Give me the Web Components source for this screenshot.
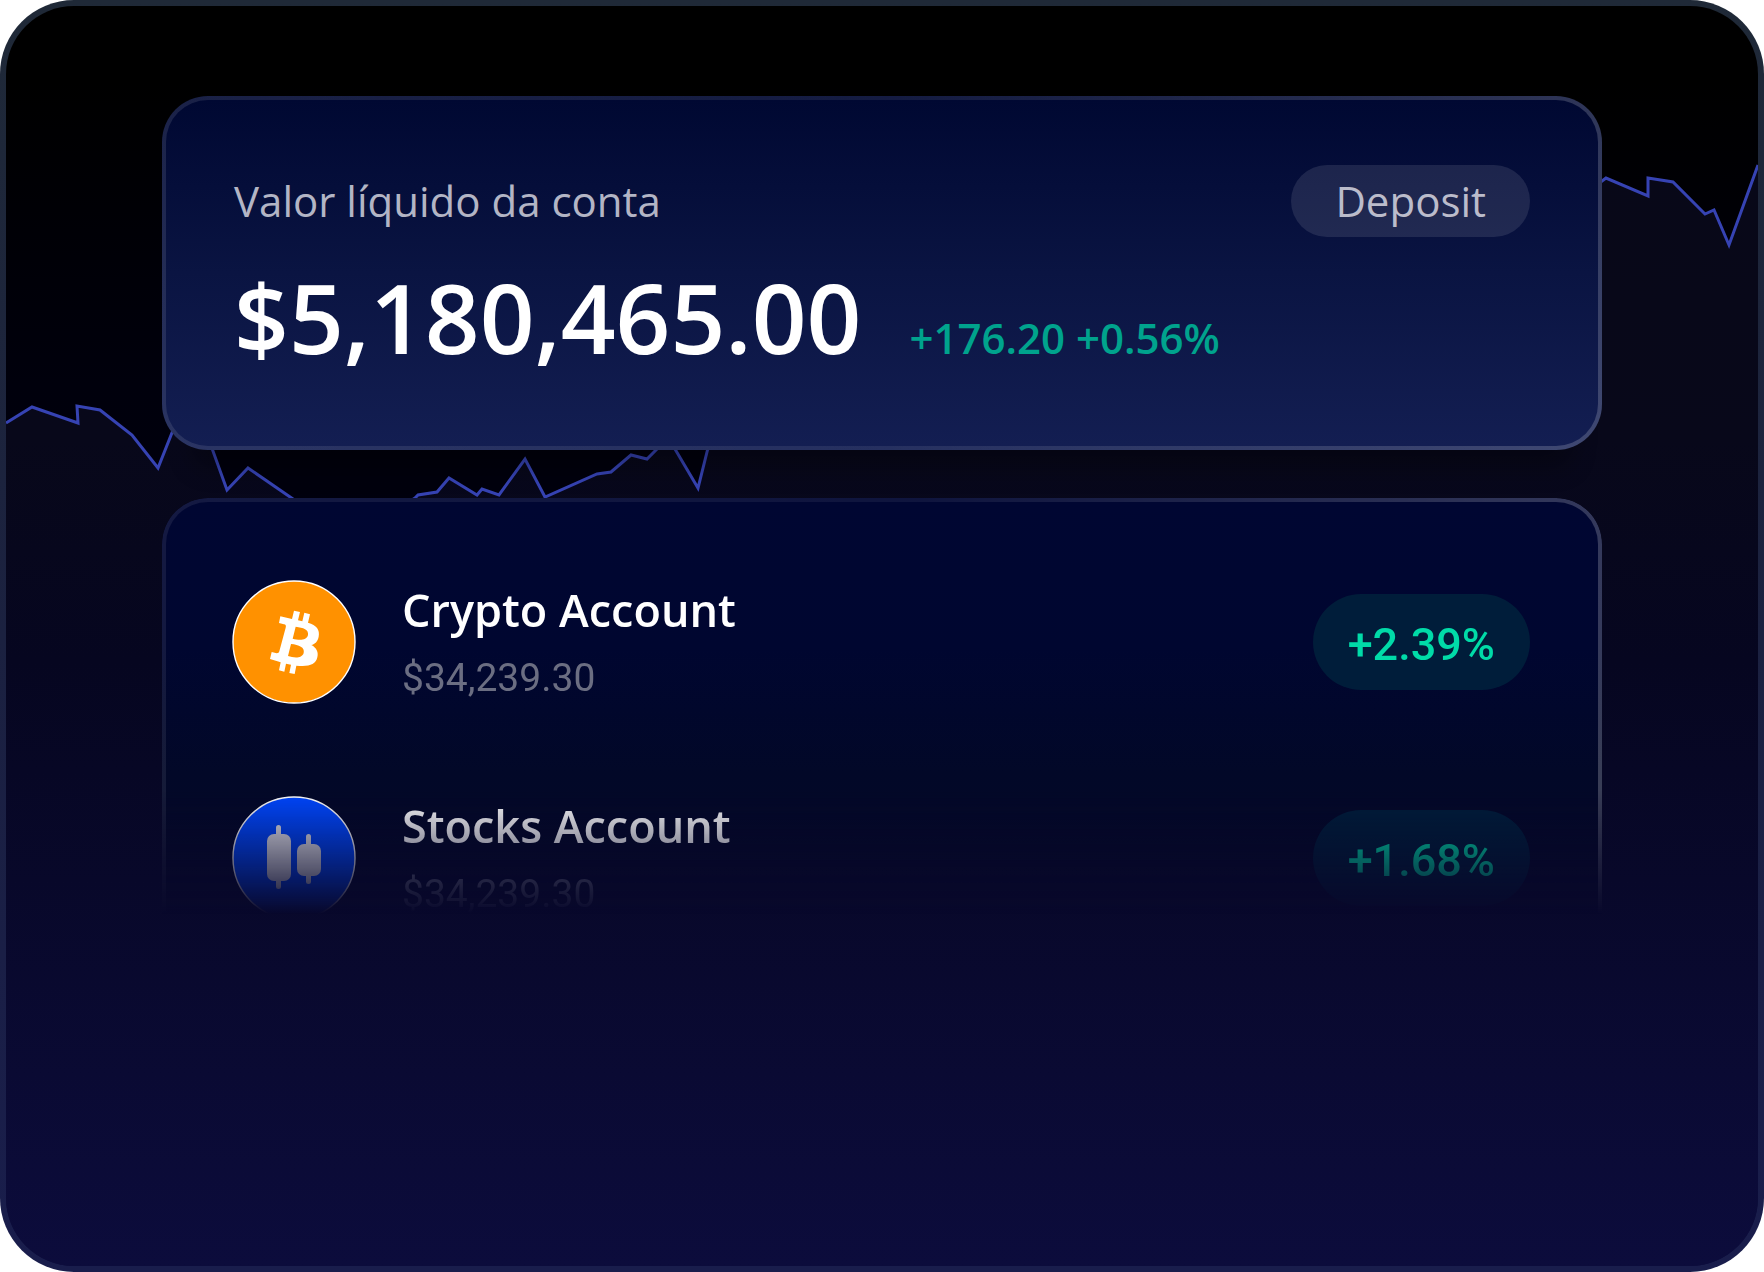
<!DOCTYPE html>
<html lang="pt">
<head>
<meta charset="utf-8">
<meta name="viewport" content="width=device-width, initial-scale=1">
<title>Valor líquido da conta</title>
<style>
    body {
        margin: 0;
        background: #fff;
        font-family: "Open Sans", "Noto Sans", sans-serif;
        color: #fff;
    }
</style>
</head>
<body>
<wallet-stage>
    <balance-card amount="$5,180,465.00" change="+176.20 +0.56%">
        Valor líquido da conta
        <span slot="action">Deposit</span>
    </balance-card>
    <account-list>
        <account-row name="Crypto Account" amount="$34,239.30" change="+2.39%">
            <svg slot="icon" viewBox="0 0 120 120" aria-hidden="true">
                <circle cx="60" cy="60" r="61" fill="#ff9100" stroke="#fff" stroke-width="1.4"/>
                <g transform="translate(60 60) scale(.3333) translate(-882 -786)">
                    <path fill="#fff" fill-rule="evenodd" d="M841 709L876 717L882 692L900 696L894 721L907 724L913 698L930 703L924 728C950 735 960 750 956 770C953 785 945 792 934 795C950 803 956 818 952 832C947 855 925 861 889 857L884 882L868 879L873 854L858 851L853 875L837 871L842 847L810 837L815 816L830 820C835 820 837 818 838 814L857 743C859 736 857 734 852 733L837 729ZM887 740L878 776C895 781 920 783 924 765C927 748 910 743 887 740ZM873 792L864 828C882 834 906 836 911 819C915 802 897 794 873 792Z"/>
                </g>
            </svg>
        </account-row>
        <account-row name="Stocks Account" amount="$34,239.30" change="+1.68%">
            <svg slot="icon" viewBox="0 0 120 120" aria-hidden="true">
                <circle cx="60" cy="60" r="61" fill="#0047ff" stroke="#fff" stroke-width="1.4"/>
                <g fill="#e4e4ea">
                    <rect x="33" y="36" width="24" height="47" rx="7"/>
                    <rect x="42" y="27" width="5" height="64" rx="2.5"/>
                    <rect x="63" y="46" width="24" height="32" rx="7"/>
                    <rect x="72" y="36" width="5" height="50" rx="2.5"/>
                </g>
            </svg>
        </account-row>
    </account-list>
</wallet-stage>

<script>
class WalletStage extends HTMLElement {
    constructor() {
        super();
        this.attachShadow({ mode: 'open' });
    }

    connectedCallback() {
        this.shadowRoot.innerHTML = `
            <style>
                :host {
                    display: block;
                    position: relative;
                    box-sizing: border-box;
                    min-height: 100vh;
                    padding: 90px 156px;
                    border: 6px solid transparent;
                    border-radius: 74px;
                    overflow: hidden;
                    background:
                        linear-gradient(180deg, #000 0%, #000 6%, #00000c 30%, #00000e 45%, #07072a 68%, #0c0c3c 100%) padding-box,
                        linear-gradient(180deg, #1f2937 0%, #1b2140 50%, #191d4c 100%) border-box;
                }

                .chart {
                    position: absolute;
                    inset: 0;
                    width: 100%;
                    height: 100%;
                }

                .content {
                    position: relative;
                    display: grid;
                    gap: 48px;
                }

                @media (max-width: 900px) {
                    :host {
                        padding: 48px 24px;
                    }
                }
            </style>
            <svg class="chart" viewBox="6 6 1752 1260" preserveAspectRatio="none" aria-hidden="true">
                <defs>
                    <linearGradient id="area" x1="0" y1="165" x2="0" y2="1266" gradientUnits="userSpaceOnUse">
                        <stop offset="0" stop-color="#080818"/>
                        <stop offset=".25" stop-color="#08081a"/>
                        <stop offset=".45" stop-color="#060620"/>
                        <stop offset=".65" stop-color="#08082a"/>
                        <stop offset="1" stop-color="#0c0c3c"/>
                    </linearGradient>
                </defs>
                <path fill="url(#area)" d="M6 423L32 407L78 423L77 406L100 410L132 435L158 468L185 400L200 415L227 490L248 468L293 499L350 540L415 498L418 495L437 492L449 478L477 495L482 489L499 495L525 459L545 497L597 474L611 472L631 455L647 459L662 444L672 444L698 488L720 400L1100 300L1590 190L1606 178L1648 196V178L1673 182L1705 214L1714 210L1729 245L1758 165V1266H6Z"/>
                <path fill="none" stroke="#3643b3" stroke-width="3" d="M6 423L32 407L78 423L77 406L100 410L132 435L158 468L185 400L200 415L227 490L248 468L293 499L350 540L415 498L418 495L437 492L449 478L477 495L482 489L499 495L525 459L545 497L597 474L611 472L631 455L647 459L662 444L672 444L698 488L720 400L1100 300L1590 190L1606 178L1648 196V178L1673 182L1705 214L1714 210L1729 245L1758 165"/>
            </svg>
            <div class="content"><slot></slot></div>
        `;
    }
}

class BalanceCard extends HTMLElement {
    constructor() {
        super();
        this.attachShadow({ mode: 'open' });
    }

    connectedCallback() {
        this.shadowRoot.innerHTML = `
            <style>
                :host {
                    --fill: linear-gradient(180deg, #000832 0%, #0a1442 50%, #131e52 100%);
                    display: flex;
                    flex-direction: column;
                    gap: 24px;
                    padding: 65px 68px 73px;
                    border: 4px solid transparent;
                    border-radius: 46px;
                    background:
                        var(--fill) padding-box,
                        linear-gradient(95deg, rgba(255, 255, 255, 0.1), rgba(255, 255, 255, 0.08) 50%, rgba(255, 255, 255, 0.19)) border-box,
                        var(--fill) border-box;
                    box-shadow: 0 48px 24px -30px rgba(0, 0, 0, 0.3);
                }

                .top {
                    display: flex;
                    align-items: center;
                    justify-content: space-between;
                    gap: 24px;
                }

                h2 {
                    margin: 0;
                    font-size: 42px;
                    line-height: 56px;
                    font-weight: 400;
                    color: #b3b5c5;
                }

                button {
                    height: 72px;
                    padding: 0 44px;
                    border: 0;
                    border-radius: 36px;
                    font: inherit;
                    font-size: 42px;
                    line-height: 56px;
                    color: #bbbccb;
                    background: rgba(255, 255, 255, 0.1);
                    cursor: pointer;
                }

                .figures {
                    display: flex;
                    flex-wrap: wrap;
                    align-items: baseline;
                    gap: 0 48px;
                }

                .amount {
                    font-size: 96px;
                    line-height: 112px;
                    font-weight: 600;
                }

                .change {
                    font-size: 42px;
                    line-height: 56px;
                    font-weight: 600;
                    color: #00a38d;
                }
            </style>
            <div class="top">
                <h2><slot></slot></h2>
                <button type="button"><slot name="action"></slot></button>
            </div>
            <div class="figures">
                <span class="amount">${this.getAttribute('amount')}</span>
                <span class="change">${this.getAttribute('change')}</span>
            </div>
        `;
    }
}

class AccountList extends HTMLElement {
    constructor() {
        super();
        this.attachShadow({ mode: 'open' });
    }

    connectedCallback() {
        this.setAttribute('role', 'list');
        this.shadowRoot.innerHTML = `
            <style>
                :host {
                    --fill: linear-gradient(180deg, #000632 0%, #000630 35%, #020828 65%, #060828 100%);
                    display: grid;
                    gap: 96px;
                    padding: 80px 68px 0;
                    border: 4px solid transparent;
                    border-bottom: 0;
                    border-radius: 46px 46px 0 0;
                    background:
                        var(--fill) padding-box,
                        linear-gradient(100deg, rgba(255, 255, 255, 0.08), rgba(255, 255, 255, 0.06) 50%, rgba(255, 255, 255, 0.22)) border-box,
                        var(--fill) border-box;
                    /* the last row sinks into the page */
                    mask-image: linear-gradient(180deg, #000 calc(100% - 128px), transparent calc(100% - 4px));
                }
            </style>
            <slot></slot>
        `;
    }
}

class AccountRow extends HTMLElement {
    constructor() {
        super();
        this.attachShadow({ mode: 'open' });
    }

    connectedCallback() {
        this.setAttribute('role', 'listitem');
        this.shadowRoot.innerHTML = `
            <style>
                :host {
                    display: flex;
                    align-items: center;
                    gap: 48px;
                    height: 120px;
                }

                ::slotted(svg) {
                    flex: none;
                    width: 120px;
                    height: 120px;
                    overflow: visible;
                }

                .text {
                    flex: 1;
                    display: grid;
                    gap: 16px;
                }

                .name {
                    font-size: 45px;
                    line-height: 56px;
                    font-weight: 600;
                }

                .amount {
                    font-family: Roboto, sans-serif;
                    font-size: 39px;
                    line-height: 48px;
                    color: #6b6e82;
                }

                .badge {
                    box-sizing: border-box;
                    height: 96px;
                    padding: 6px 35px 0;
                    border-radius: 48px;
                    font-family: Roboto, sans-serif;
                    font-size: 45px;
                    line-height: 90px;
                    font-weight: 500;
                    color: #00dba8;
                    background: #001d3a;
                }
            </style>
            <slot name="icon"></slot>
            <div class="text">
                <span class="name">${this.getAttribute('name')}</span>
                <span class="amount">${this.getAttribute('amount')}</span>
            </div>
            <span class="badge">${this.getAttribute('change')}</span>
        `;
    }
}

customElements.define('wallet-stage', WalletStage);
customElements.define('balance-card', BalanceCard);
customElements.define('account-list', AccountList);
customElements.define('account-row', AccountRow);
</script>
</body>
</html>
